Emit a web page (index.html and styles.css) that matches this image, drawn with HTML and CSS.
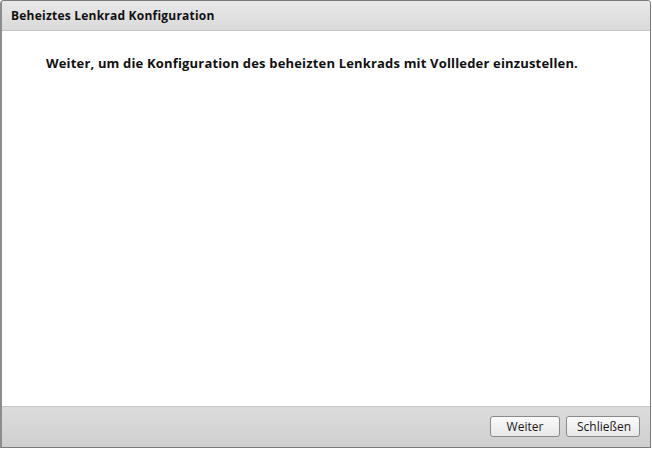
FILE: index.html
```html
<!DOCTYPE html>
<html lang="de">
<head>
<meta charset="utf-8">
<title>Beheiztes Lenkrad Konfiguration</title>
<link rel="stylesheet" href="styles.css">
</head>
<body>
<div class="dialog">
  <div class="titlebar">Beheiztes Lenkrad Konfiguration</div>
  <div class="content">
    <p class="message">Weiter, um die Konfiguration des beheizten Lenkrads mit Vollleder einzustellen.</p>
  </div>
  <div class="footer">
    <button class="btn">Weiter</button>
    <button class="btn">Schließen</button>
  </div>
</div>
</body>
</html>
```
FILE: styles.css
```css
html, body {
  margin: 0;
  padding: 0;
  width: 652px;
  height: 449px;
  background: #ffffff;
  overflow: hidden;
}
.dialog {
  box-sizing: border-box;
  width: 651px;
  height: 448px;
  display: flex;
  flex-direction: column;
  border: 1px solid #7a7a7a;
  border-left: 2px solid #8c8c8c;
  border-radius: 4px 4px 0 0;
  font-family: "Open Sans", "DejaVu Sans", sans-serif;
  color: #1a1a1a;
  background: #ffffff;
}
.titlebar {
  height: 30px;
  box-sizing: border-box;
  padding-left: 9px;
  display: flex;
  align-items: center;
  font-size: 12px;
  font-weight: bold;
  letter-spacing: 0.22px;
  color: #111111;
  background: linear-gradient(#e8e8e8, #dadada);
  border-bottom: 1px solid #c4c4c4;
  border-radius: 3px 3px 0 0;
}
.content {
  flex: 1;
  background: #ffffff;
  padding: 0 0 0 44px;
}
.message {
  margin: 23px 0 0 0;
  font-size: 13px;
  font-weight: bold;
  letter-spacing: 0.17px;
  color: #111111;
}
.footer {
  height: 41px;
  box-sizing: border-box;
  border-top: 1px solid #c6c6c6;
  background: linear-gradient(#dcdcdc, #cfcfcf);
  display: flex;
  justify-content: flex-end;
  align-items: center;
  gap: 6px;
  padding: 0 10px 1px 0;
}
.btn {
  height: 21px;
  box-sizing: border-box;
  padding: 0 10px;
  font-family: "Open Sans", "DejaVu Sans", sans-serif;
  font-size: 12px;
  color: #1a1a1a;
  background: linear-gradient(#fafafa, #e8e8e8);
  border: 1px solid #8a8a8a;
  border-radius: 3px;
}
.btn:first-child {
  width: 70px;
}
.btn:last-child {
  width: 74px;
}
```
